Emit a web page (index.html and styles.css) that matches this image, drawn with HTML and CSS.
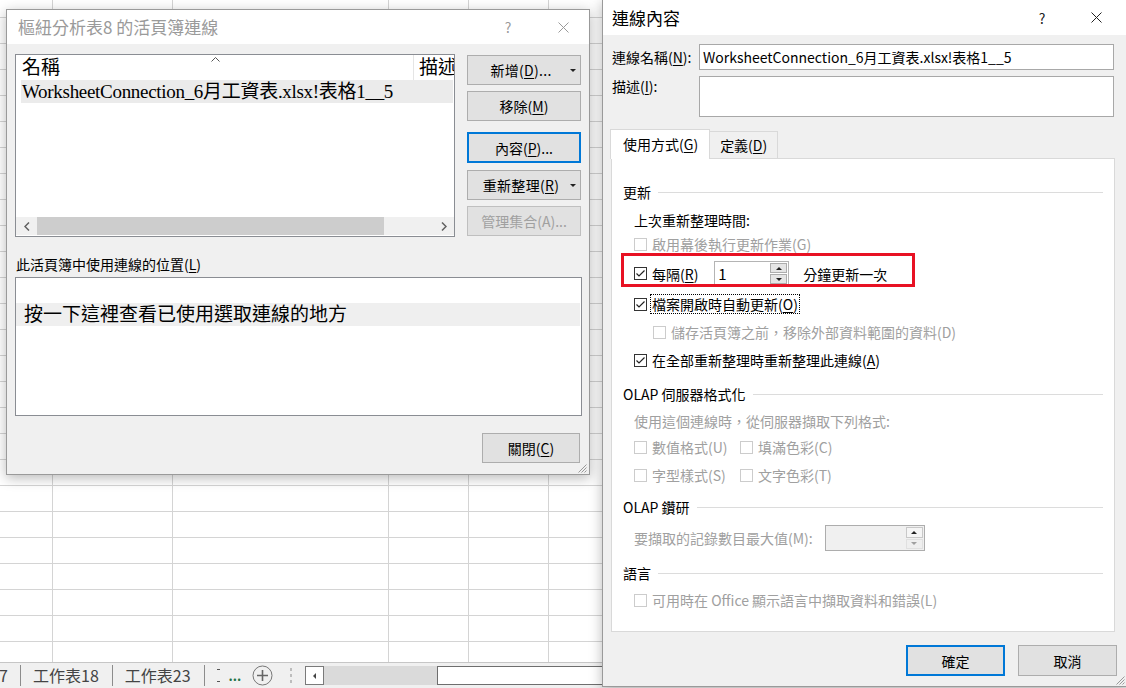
FILE: index.html
```html
<!DOCTYPE html>
<html lang="zh-Hant">
<head>
    <meta charset="UTF-8">
    <title>連線內容</title>
    <link rel="stylesheet" href="styles.css">
</head>
<body>
    <!-- 背景の Excel シート -->
    <div class="sheet">
        <div class="grid">
            <div class="col c-a"></div>
            <div class="col c-b"></div>
            <div class="col c-c"></div>
            <div class="col c-d"></div>
            <div class="col c-d"></div>
            <div class="col c-d"></div>
        </div>
        <div class="tabbar">
            <span class="tab tab-cut">7</span>
            <span class="tab">工作表18</span>
            <span class="tab">工作表23</span>
            <span class="tab-clip"></span>
            <span class="more">...</span>
            <span class="add-sheet">
                <svg width="21" height="21" viewBox="0 0 21 21"><circle cx="10.5" cy="10.5" r="9.5" fill="none" stroke="#777"/><path d="M10.5 5v11M5 10.5h11" stroke="#666" stroke-width="1.6"/></svg>
            </span>
            <span class="grip-dots"><i></i><i></i><i></i></span>
            <div class="hscroll">
                <span class="hs-btn"><i class="tri-left"></i></span>
                <span class="hs-track"></span>
                <span class="hs-thumb"></span>
            </div>
        </div>
    </div>

    <!-- 活頁簿連線 -->
    <div class="win win-conn">
        <div class="titlebar inactive">
            <span class="title">樞紐分析表8 的活頁簿連線</span>
            <span class="tb-help">?</span>
            <span class="tb-close"><svg width="11" height="11" viewBox="0 0 11 11"><path d="M0.5 0.5L10.5 10.5M10.5 0.5L0.5 10.5" stroke="currentColor"/></svg></span>
        </div>
        <div class="conn-body">
            <div class="conn-top">
                <div class="listview">
                    <div class="lv-head">
                        <span class="lv-col-name">名稱
                            <svg class="sort-caret" width="9" height="5" viewBox="0 0 9 5"><path d="M0.5 4.5L4.5 0.5L8.5 4.5" fill="none" stroke="#555"/></svg>
                        </span>
                        <span class="lv-col-desc">描述</span>
                    </div>
                    <div class="lv-row">WorksheetConnection_6月工資表.xlsx!表格1__5</div>
                    <div class="lv-fill"></div>
                    <div class="lv-scroll">
                        <span class="sb-arrow"><svg width="6" height="9" viewBox="0 0 6 9"><path d="M5 0.5L1 4.5L5 8.5" fill="none" stroke="#606060" stroke-width="1.5"/></svg></span>
                        <span class="sb-thumb"></span>
                        <span class="sb-space"></span>
                        <span class="sb-arrow"><svg width="6" height="9" viewBox="0 0 6 9"><path d="M1 0.5L5 4.5L1 8.5" fill="none" stroke="#606060" stroke-width="1.5"/></svg></span>
                    </div>
                </div>
                <div class="conn-buttons">
                    <button class="btn split">新增(<u>D</u>)...</button>
                    <button class="btn">移除(<u>M</u>)</button>
                    <button class="btn btn-default btn-props">內容(<u>P</u>)...</button>
                    <button class="btn split btn-refresh">重新整理(<u>R</u>)</button>
                    <button class="btn" disabled>管理集合(A)...</button>
                </div>
            </div>
            <div class="usage-label">此活頁簿中使用連線的位置(<u>L</u>)</div>
            <div class="usage-box">
                <div class="usage-row">按一下這裡查看已使用選取連線的地方</div>
            </div>
            <div class="conn-footer">
                <button class="btn btn-close">關閉(<u>C</u>)</button>
            </div>
        </div>
        <svg class="size-grip" width="9" height="9" viewBox="0 0 9 9"><path d="M8.5 0.5L0.5 8.5M8.5 3.5L3.5 8.5M8.5 6.5L6.5 8.5" stroke="#999"/></svg>
    </div>

    <!-- 連線內容 -->
    <div class="win win-props">
        <div class="titlebar">
            <span class="title">連線內容</span>
            <span class="tb-help">?</span>
            <span class="tb-close"><svg width="11" height="11" viewBox="0 0 11 11"><path d="M0.5 0.5L10.5 10.5M10.5 0.5L0.5 10.5" stroke="currentColor"/></svg></span>
        </div>
        <div class="props-body">
            <div class="field">
                <label class="field-label">連線名稱(<u>N</u>):</label>
                <div class="textbox tb-name">WorksheetConnection_6月工資表.xlsx!表格1__5</div>
            </div>
            <div class="field field-desc">
                <label class="field-label">描述(<u>I</u>):</label>
                <div class="textbox tb-desc"></div>
            </div>

            <div class="tabs">
                <span class="tab-item active">使用方式(<u>G</u>)</span>
                <span class="tab-item">定義(<u>D</u>)</span>
            </div>

            <div class="tab-panel">
                <div class="group-title first">更新</div>
                <div class="opt indent">上次重新整理時間:</div>
                <div class="opt indent disabled near"><span class="cb"></span>啟用幕後執行更新作業(G)</div>
                <div class="opt indent interval">
                    <span class="cb"><svg width="11" height="11" viewBox="0 0 11 11"><path d="M1.5 5.5L4 8L9.5 2.5" fill="none" stroke="#222" stroke-width="1.2"/></svg></span>每隔(<u>R</u>)
                    <div class="spin">
                        <span class="spin-value">1</span>
                        <span class="spin-btns">
                            <span class="spin-up"><i class="tri-up"></i></span>
                            <span class="spin-down"><i class="tri-down"></i></span>
                        </span>
                    </div>
                    <span class="spin-unit">分鐘更新一次</span>
                </div>
                <div class="opt indent">
                    <span class="cb cb-focus"><svg width="11" height="11" viewBox="0 0 11 11"><path d="M1.5 5.5L4 8L9.5 2.5" fill="none" stroke="#222" stroke-width="1.2"/></svg></span><span class="focus-ring">檔案開啟時自動更新(<u>O</u>)</span>
                </div>
                <div class="opt sub disabled"><span class="cb"></span>儲存活頁簿之前，移除外部資料範圍的資料(D)</div>
                <div class="opt indent">
                    <span class="cb"><svg width="11" height="11" viewBox="0 0 11 11"><path d="M1.5 5.5L4 8L9.5 2.5" fill="none" stroke="#222" stroke-width="1.2"/></svg></span>在全部重新整理時重新整理此連線(<u>A</u>)
                </div>

                <div class="group-title olap">OLAP 伺服器格式化</div>
                <div class="opt indent disabled after-title">使用這個連線時，從伺服器擷取下列格式:</div>
                <div class="opt indent disabled pair-row first-pair">
                    <span class="pair-item"><span class="cb"></span>數值格式(U)</span>
                    <span class="pair-item"><span class="cb"></span>填滿色彩(C)</span>
                </div>
                <div class="opt indent disabled pair-row">
                    <span class="pair-item"><span class="cb"></span>字型樣式(S)</span>
                    <span class="pair-item"><span class="cb"></span>文字色彩(T)</span>
                </div>

                <div class="group-title drill">OLAP 鑽研</div>
                <div class="opt indent disabled max-row">
                    要擷取的記錄數目最大值(M):
                    <div class="spin spin-off">
                        <span class="spin-value"></span>
                        <span class="spin-btns">
                            <span class="spin-up"><i class="tri-up"></i></span>
                            <span class="spin-down"><i class="tri-down"></i></span>
                        </span>
                    </div>
                </div>

                <div class="group-title lang">語言</div>
                <div class="opt indent disabled lang-opt"><span class="cb"></span>可用時在 Office 顯示語言中擷取資料和錯誤(L)</div>

                <div class="highlight"></div>
            </div>

            <div class="dlg-buttons">
                <button class="btn btn-default">確定</button>
                <button class="btn">取消</button>
            </div>
        </div>
        <svg class="size-grip" width="9" height="9" viewBox="0 0 9 9"><path d="M8.5 0.5L0.5 8.5M8.5 3.5L3.5 8.5M8.5 6.5L6.5 8.5" stroke="#999"/></svg>
    </div>
</body>
</html>
```

FILE: styles.css
```css
* {
    margin: 0;
    padding: 0;
    box-sizing: border-box;
}

body {
    width: 1126px;
    height: 688px;
    overflow: hidden;
    position: relative;
    background: #fff;
    color: #000;
    font-family: "Noto Sans CJK TC", "Noto Sans", sans-serif;
    font-size: 14px;
    line-height: 20px;
}

u {
    text-decoration: underline;
    text-underline-offset: 2px;
}

/* Excel シート */
.sheet {
    display: flex;
    flex-direction: column;
    height: 688px;
}

.grid {
    height: 662px;
    display: flex;
    background-image: linear-gradient(to bottom, transparent 25px, #d4d4d4 25px);
    background-size: 100% 26px;
    background-position: 0 -8px;
}

.col {
    flex: none;
    height: 100%;
    border-right: 1px solid #d4d4d4;
}

.c-a { width: 53px; }
.c-b { width: 120px; }
.c-c { width: 216px; }
.c-d { width: 80px; }

.tabbar {
    height: 26px;
    border-top: 1px solid #c6c6c6;
    background: #f0f0f0;
    display: flex;
    align-items: center;
    font-size: 16px;
    color: #444;
    white-space: nowrap;
}

.tab {
    padding: 0 13px 0 12px;
    border-right: 1px solid #8c8c8c;
    line-height: 21px;
}

.tab-cut {
    width: 22px;
    padding: 0;
    margin-left: -1px;
}

/* 切れたタブ名の端 */
.tab-clip {
    width: 3px;
    height: 13px;
    margin-left: 12px;
    border-top: 1px solid #555;
    border-bottom: 1px solid #555;
}

.more {
    margin-left: 9px;
    color: #217346;
    font-weight: 700;
    font-size: 13px;
    line-height: 14px;
}

.add-sheet {
    margin-left: 11px;
    display: flex;
}

.grip-dots {
    margin-left: 17px;
    display: flex;
    flex-direction: column;
    gap: 3px;
}

.grip-dots i {
    width: 2px;
    height: 3px;
    background: #bdbdbd;
}

.hscroll {
    margin-left: 13px;
    flex: 1;
    display: flex;
    height: 19px;
}

.hs-btn {
    width: 19px;
    border: 1px solid #7a7a7a;
    background: #fff;
    display: flex;
    align-items: center;
    justify-content: center;
}

.tri-left {
    width: 0;
    height: 0;
    border-top: 3px solid transparent;
    border-bottom: 3px solid transparent;
    border-right: 3px solid #444;
}

.hs-track {
    width: 113px;
    background: #dadada;
}

.hs-thumb {
    flex: 1;
    border: 1px solid #6e6e6e;
    background: #fff;
}

/* ダイアログ共通 */
.win {
    position: absolute;
    background: #f0f0f0;
    border: 1px solid #9a9a9a;
    box-shadow: 0 3px 12px rgba(0, 0, 0, 0.28);
}

.titlebar {
    display: flex;
    align-items: center;
    background: #fff;
    height: 35px;
}

.titlebar .title {
    flex: 1;
    font-size: 17px;
    padding-left: 9px;
}

.tb-help,
.tb-close {
    width: 46px;
    display: flex;
    justify-content: center;
    align-items: center;
    font-size: 14px;
    color: #222;
}

.titlebar.inactive {
    color: #9a9a9a;
    height: 34px;
}

.titlebar.inactive .title {
    padding-left: 11px;
}

.titlebar.inactive .tb-help,
.titlebar.inactive .tb-close {
    color: #9a9a9a;
}

.win-conn .tb-help { margin-right: 9px; }
.win-conn .tb-close { margin-right: 3px; }
.win-props .tb-help { margin-right: 8px; }
.win-props .tb-close { margin-right: 8px; }

.btn {
    height: 30px;
    background: #e1e1e1;
    border: 1px solid #adadad;
    font-family: inherit;
    font-size: 14px;
    color: #000;
    position: relative;
}

.btn:disabled {
    color: #a0a0a0;
    border-color: #bfbfbf;
    background: #e1e1e1;
}

.btn-default {
    border: 2px solid #0078d7;
}

.btn.split {
    padding-right: 6px;
    letter-spacing: 0.3px;
}

.btn.split::after {
    content: "";
    position: absolute;
    right: 4px;
    top: 13px;
    border-left: 3px solid transparent;
    border-right: 3px solid transparent;
    border-top: 3px solid #222;
}

.size-grip {
    position: absolute;
    right: 2px;
    bottom: 1px;
}

/* 活頁簿連線 */
.win-conn {
    left: 6px;
    top: 9px;
    width: 584px;
    height: 466px;
}

.conn-body {
    padding: 10px 7px 0 8px;
}

.conn-top {
    display: flex;
}

.listview {
    width: 440px;
    height: 183px;
    border: 1px solid #8a8d93;
    background: #fff;
    display: flex;
    flex-direction: column;
    overflow: hidden;
    font-family: "Liberation Serif", "Noto Sans CJK TC", serif;
    font-size: 19px;
}

.lv-head {
    display: flex;
    height: 25px;
    flex: none;
    white-space: nowrap;
}

.lv-col-name {
    width: 398px;
    flex: none;
    padding: 2px 0 0 6px;
    border-right: 1px solid #e5e5e5;
    position: relative;
    line-height: 22px;
}

.sort-caret {
    position: absolute;
    top: 2px;
    left: 195px;
}

.lv-col-desc {
    padding: 2px 0 0 5px;
    line-height: 22px;
}

.lv-row {
    height: 23px;
    margin: 0 1px 0 5px;
    padding-left: 1px;
    background: #ebebeb;
    line-height: 23px;
    letter-spacing: -0.3px;
    white-space: nowrap;
}

.lv-fill {
    flex: 1;
}

.lv-scroll {
    height: 18px;
    margin-bottom: 1px;
    flex: none;
    display: flex;
    background: #f0f0f0;
}

.sb-arrow {
    width: 21px;
    display: flex;
    align-items: center;
    justify-content: center;
}

.sb-thumb {
    width: 347px;
    background: #cdcdcd;
}

.sb-space {
    flex: 1;
}

.conn-buttons {
    width: 114px;
    margin-left: 12px;
    display: flex;
    flex-direction: column;
    gap: 6px;
    padding-top: 1px;
}

.conn-buttons .btn-props {
    margin-top: 5px;
    height: 31px;
}

.conn-buttons .btn-refresh {
    margin-top: 1px;
}

.usage-label {
    margin-top: 17px;
    padding-left: 1px;
}

.usage-box {
    margin-top: 3px;
    height: 139px;
    border: 1px solid #8a8d93;
    background: #fff;
    padding: 25px 1px 0 0;
}

.usage-row {
    height: 23px;
    background: #efefef;
    padding-left: 8px;
    font-family: "Liberation Serif", "Noto Sans CJK TC", serif;
    font-size: 19px;
    line-height: 23px;
}

.conn-footer {
    display: flex;
    justify-content: flex-end;
    margin-top: 17px;
    padding-right: 2px;
}

.btn-close {
    width: 98px;
}

/* 連線內容 */
.win-props {
    left: 602px;
    top: -1px;
    width: 526px;
    height: 688px;
}

.props-body {
    padding: 9px 13px 0 9px;
}

.field {
    display: flex;
    align-items: center;
}

.field-label {
    width: 87px;
    flex: none;
}

.textbox {
    flex: 1;
    background: #fff;
    border: 1px solid #a8a8a8;
    height: 26px;
    padding-left: 3px;
    font-size: 14px;
    line-height: 24px;
    white-space: nowrap;
}

.field-desc {
    margin-top: 6px;
    align-items: flex-start;
}

.tb-desc {
    height: 41px;
}

.tabs {
    margin-top: 12px;
    display: flex;
    align-items: flex-end;
    height: 29px;
    margin-left: -2px;
    position: relative;
    z-index: 1;
}

.tab-item {
    height: 27px;
    border: 1px solid #d9d9d9;
    border-bottom: none;
    background: #f0f0f0;
    padding: 0 10px;
    line-height: 26px;
    white-space: nowrap;
}

.tab-item.active {
    height: 30px;
    margin-bottom: -1px;
    background: #fff;
    padding: 0 11px 0 12px;
    line-height: 28px;
}

.tab-item + .tab-item {
    border-left: none;
}

.tab-panel {
    position: relative;
    margin-left: -1px;
    margin-right: -1px;
    height: 474px;
    background: #fff;
    border: 1px solid #d9d9d9;
    padding: 23px 11px 0 11px;
}

.group-title {
    display: flex;
    align-items: center;
    margin-top: 14px;
}

.group-title::after {
    content: "";
    flex: 1;
    height: 1px;
    background: #dcdcdc;
    margin-left: 7px;
}

.group-title.first { margin-top: 0; }
.group-title.drill { margin-top: 12px; }
.group-title.lang { margin-top: 12px; }

.opt {
    display: flex;
    align-items: center;
    margin-top: 8px;
    white-space: nowrap;
}

.opt.indent {
    padding-left: 11px;
}

.opt.sub {
    padding-left: 30px;
}

.opt.near { margin-top: 4px; }
.opt.after-title { margin-top: 7px; }
.opt.first-pair { margin-top: 6px; }
.opt.lang-opt { margin-top: 7px; }
.opt.interval { margin-top: 7px; height: 25px; }

.opt.disabled {
    color: #a0a0a0;
}

.cb {
    width: 13px;
    height: 13px;
    flex: none;
    border: 1px solid #333;
    background: #fff;
    margin-right: 5px;
    display: flex;
    align-items: center;
    justify-content: center;
}

.opt.disabled .cb {
    border-color: #cccccc;
}

.cb-focus {
    margin-right: 3px;
}

.focus-ring {
    border: 1px dotted #000;
    padding: 0 1px;
    height: 20px;
    line-height: 18px;
}

.pair-item {
    display: flex;
    align-items: center;
    width: 106px;
}

.spin {
    display: flex;
    width: 75px;
    height: 25px;
    margin-left: 16px;
    border: 1px solid #b4b4b4;
    background: #fff;
}

.spin-value {
    flex: 1;
    padding-left: 3px;
    line-height: 23px;
    font-size: 15px;
}

.spin-btns {
    width: 19px;
    display: flex;
    flex-direction: column;
    gap: 1px;
    padding: 1px;
}

.spin-up,
.spin-down {
    flex: 1;
    border: 1px solid #adadad;
    background: #e5e5e5;
    display: flex;
    align-items: center;
    justify-content: center;
}

.tri-up {
    border-left: 3px solid transparent;
    border-right: 3px solid transparent;
    border-bottom: 3px solid #222;
}

.tri-down {
    border-left: 3px solid transparent;
    border-right: 3px solid transparent;
    border-top: 3px solid #222;
}

.spin-unit {
    margin-left: 14px;
    color: #000;
}

.max-row {
    height: 26px;
}

.spin-off {
    width: 100px;
    height: 26px;
    margin-left: 12px;
    background: #f0f0f0;
    border-color: #adadad;
}

.spin-off .spin-up {
    background: #f5f5f5;
    border-color: #c8c8c8;
}

.spin-off .spin-down {
    background: #efefef;
    border-color: #e0e0e0;
}

.spin-off .tri-down {
    border-top-color: #a0a0a0;
}

/* 赤枠の注記 */
.highlight {
    position: absolute;
    left: 9px;
    top: 94px;
    width: 294px;
    height: 34px;
    border: 3px solid #e81123;
    pointer-events: none;
}

.dlg-buttons {
    display: flex;
    justify-content: flex-end;
    gap: 13px;
    margin-top: 13px;
    margin-right: -3px;
}

.dlg-buttons .btn {
    width: 99px;
    height: 31px;
}
```
